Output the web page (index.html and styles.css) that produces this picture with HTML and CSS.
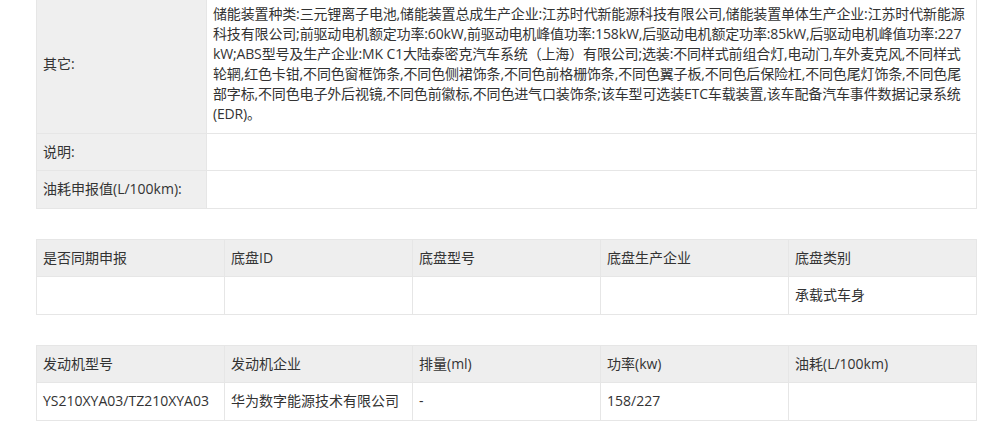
FILE: index.html
```html
<!DOCTYPE html>
<html lang="zh-CN">
<head>
<meta charset="utf-8">
<title>车型参数</title>
<link rel="stylesheet" href="styles.css">
</head>
<body>
<div class="page">
  <table class="grid info">
    <colgroup><col class="label-col"><col></colgroup>
    <tr>
      <th>其它:</th>
      <td class="long">储能装置种类:三元锂离子电池,储能装置总成生产企业:江苏时代新能源科技有限公司,储能装置单体生产企业:江苏时代新能源<br>科技有限公司;前驱动电机额定功率:60kW,前驱动电机峰值功率:158kW,后驱动电机额定功率:85kW,后驱动电机峰值功率:227<br>kW;ABS型号及生产企业:MK C1大陆泰密克汽车系统（上海）有限公司;选装:不同样式前组合灯,电动门,车外麦克风,不同样式<br>轮辋,红色卡钳,不同色窗框饰条,不同色侧裙饰条,不同色前格栅饰条,不同色翼子板,不同色后保险杠,不同色尾灯饰条,不同色尾<br>部字标,不同色电子外后视镜,不同色前徽标,不同色进气口装饰条;该车型可选装ETC车载装置,该车配备汽车事件数据记录系统<br>(EDR)。</td>
    </tr>
    <tr>
      <th>说明:</th>
      <td></td>
    </tr>
    <tr>
      <th>油耗申报值(L/100km):</th>
      <td></td>
    </tr>
  </table>

  <table class="grid cols">
    <tr class="head">
      <th>是否同期申报</th>
      <th>底盘ID</th>
      <th>底盘型号</th>
      <th>底盘生产企业</th>
      <th>底盘类别</th>
    </tr>
    <tr>
      <td></td>
      <td></td>
      <td></td>
      <td></td>
      <td>承载式车身</td>
    </tr>
  </table>

  <table class="grid cols">
    <tr class="head">
      <th>发动机型号</th>
      <th>发动机企业</th>
      <th>排量(ml)</th>
      <th>功率(kw)</th>
      <th>油耗(L/100km)</th>
    </tr>
    <tr>
      <td>YS210XYA03/TZ210XYA03</td>
      <td>华为数字能源技术有限公司</td>
      <td>-</td>
      <td>158/227</td>
      <td></td>
    </tr>
  </table>
</div>
</body>
</html>
```

FILE: styles.css
```css
html, body {
  margin: 0;
  padding: 0;
  background: #ffffff;
}

body {
  font-family: "Open Sans", "Noto Sans CJK SC", sans-serif;
  font-size: 14px;
  line-height: 20px;
  color: #333333;
}

.page {
  width: 941px;
  margin: -5px 0 0 36px;
  display: flex;
  flex-direction: column;
  gap: 30px;
}

.grid {
  width: 100%;
  border-collapse: collapse;
  table-layout: fixed;
}

.grid th,
.grid td {
  border: 1px solid #e6e6e6;
  padding: 8px 6px 8.5px 6px;
  text-align: left;
  font-weight: normal;
  vertical-align: middle;
  white-space: nowrap;
}

.label-col {
  width: 170px;
}

.info th {
  background: #efefef;
}

.info td {
  background: #ffffff;
}

.info .long {
  letter-spacing: -0.15px;
}

.cols .head th {
  background: #eeeeee;
}

.cols td {
  background: #ffffff;
}
```
